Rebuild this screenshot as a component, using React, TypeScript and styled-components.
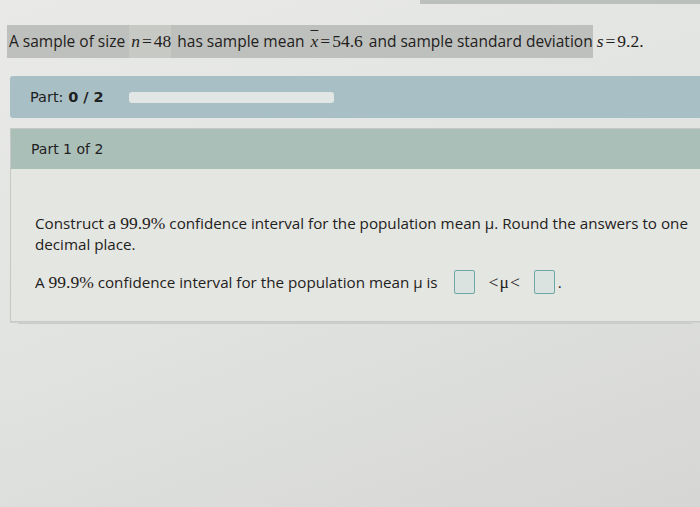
import React from 'react'
import styled, { createGlobalStyle } from 'styled-components'

const GlobalStyle = createGlobalStyle`
  html, body {
    margin: 0;
    padding: 0;
  }
  body {
    width: 700px;
    height: 507px;
    overflow: hidden;
    font-family: 'Open Sans', 'DejaVu Sans', sans-serif;
    color: #1f2120;
    background: linear-gradient(160deg, #e9eae7 0%, #e2e4e1 45%, #d6d7d4 100%);
  }
`

const Page = styled.div`
  height: 507px;
`

const TopEdge = styled.div`
  height: 4px;
  margin-left: 420px;
  background: #bcc0bd;
`

const Problem = styled.p`
  margin: 24px 0 0 7px;
  font-size: 15.5px;
  line-height: 27px;
  white-space: nowrap;
`

const Shade = styled.span<{ $light?: boolean }>`
  background: ${(p) => (p.$light ? '#c7c9c5' : '#bec0bd')};
  padding: 5px 0 6px 2px;
`

const Math = styled.span<{ $italic?: boolean }>`
  font-family: 'Liberation Serif', 'DejaVu Serif', serif;
  font-size: 17.5px;
  font-style: ${(p) => (p.$italic ? 'italic' : 'normal')};
`

const Eq = styled.span`
  margin: 0 2px;
`

const Bar = styled.span`
  text-decoration: overline;
`

const PartBar = styled.div`
  margin: 21px 0 0 10px;
  height: 42px;
  display: flex;
  align-items: center;
  gap: 25px;
  padding-left: 20px;
  background: #a9bfc6;
  border-radius: 3px 0 0 3px;
  font-family: 'DejaVu Sans', sans-serif;
  font-size: 14.5px;
`

const Strong = styled.b`
  font-weight: bold;
`

const Progress = styled.div`
  width: 205px;
  height: 11px;
  border-radius: 3px;
  background: #e2e7e6;
`

const Section = styled.section`
  margin: 10px 0 0 10px;
  border: 1px solid #c6c8c5;
  border-right: none;
  box-shadow: 0 1px 0 #d0d2cf, 0 10px 0 -8px #c8cac7;
`

const SectionHead = styled.div`
  height: 40px;
  display: flex;
  align-items: center;
  padding-left: 20px;
  background: #abbfb9;
  font-family: 'DejaVu Sans', sans-serif;
  font-size: 14px;
`

const SectionBody = styled.div`
  height: 108px;
  padding: 44px 0 0 24px;
  background: #e4e6e2;
  font-size: 15.2px;
`

const Line = styled.p<{ $gap?: number }>`
  margin: ${(p) => p.$gap ?? 0}px 0 0;
  line-height: 21px;
  white-space: nowrap;
`

const AnswerBox = styled.span<{ $before: number; $after: number }>`
  display: inline-block;
  vertical-align: middle;
  width: 19px;
  height: 22px;
  margin: -3px ${(p) => p.$after}px 0 ${(p) => p.$before}px;
  border: 1.5px solid #6fa6a6;
  border-radius: 2px;
  background: #dbe3e1;
`

const Rel = styled.span`
  margin: 0 1px;
`

export default function App() {
  return (
    <Page>
      <GlobalStyle />
      <TopEdge />
      <Problem>
        <Shade>A sample of size </Shade>
        <Shade $light>
          <Math $italic>n</Math>
          <Math>
            <Eq>=</Eq>48
          </Math>
        </Shade>
        <Shade> has sample mean </Shade>
        <Shade>
          <Math $italic>
            <Bar>x</Bar>
          </Math>
          <Math>
            <Eq>=</Eq>54.6
          </Math>
        </Shade>
        <Shade> and sample standard deviation</Shade>{' '}
        <Math $italic>s</Math>
        <Math>
          <Eq>=</Eq>9.2.
        </Math>
      </Problem>

      <PartBar>
        <span>
          Part: <Strong>0 / 2</Strong>
        </span>
        <Progress />
      </PartBar>

      <Section>
        <SectionHead>Part 1 of 2</SectionHead>
        <SectionBody>
          <Line>
            Construct a <Math>99.9%</Math> confidence interval for the population mean μ. Round the answers to one
          </Line>
          <Line>decimal place.</Line>
          <Line $gap={17}>
            A <Math>99.9%</Math> confidence interval for the population mean μ is
            <AnswerBox $before={16} $after={14} />
            <Math>
              &lt;<Rel>μ</Rel>&lt;
            </Math>
            <AnswerBox $before={14} $after={3} />.
          </Line>
        </SectionBody>
      </Section>
    </Page>
  )
}
